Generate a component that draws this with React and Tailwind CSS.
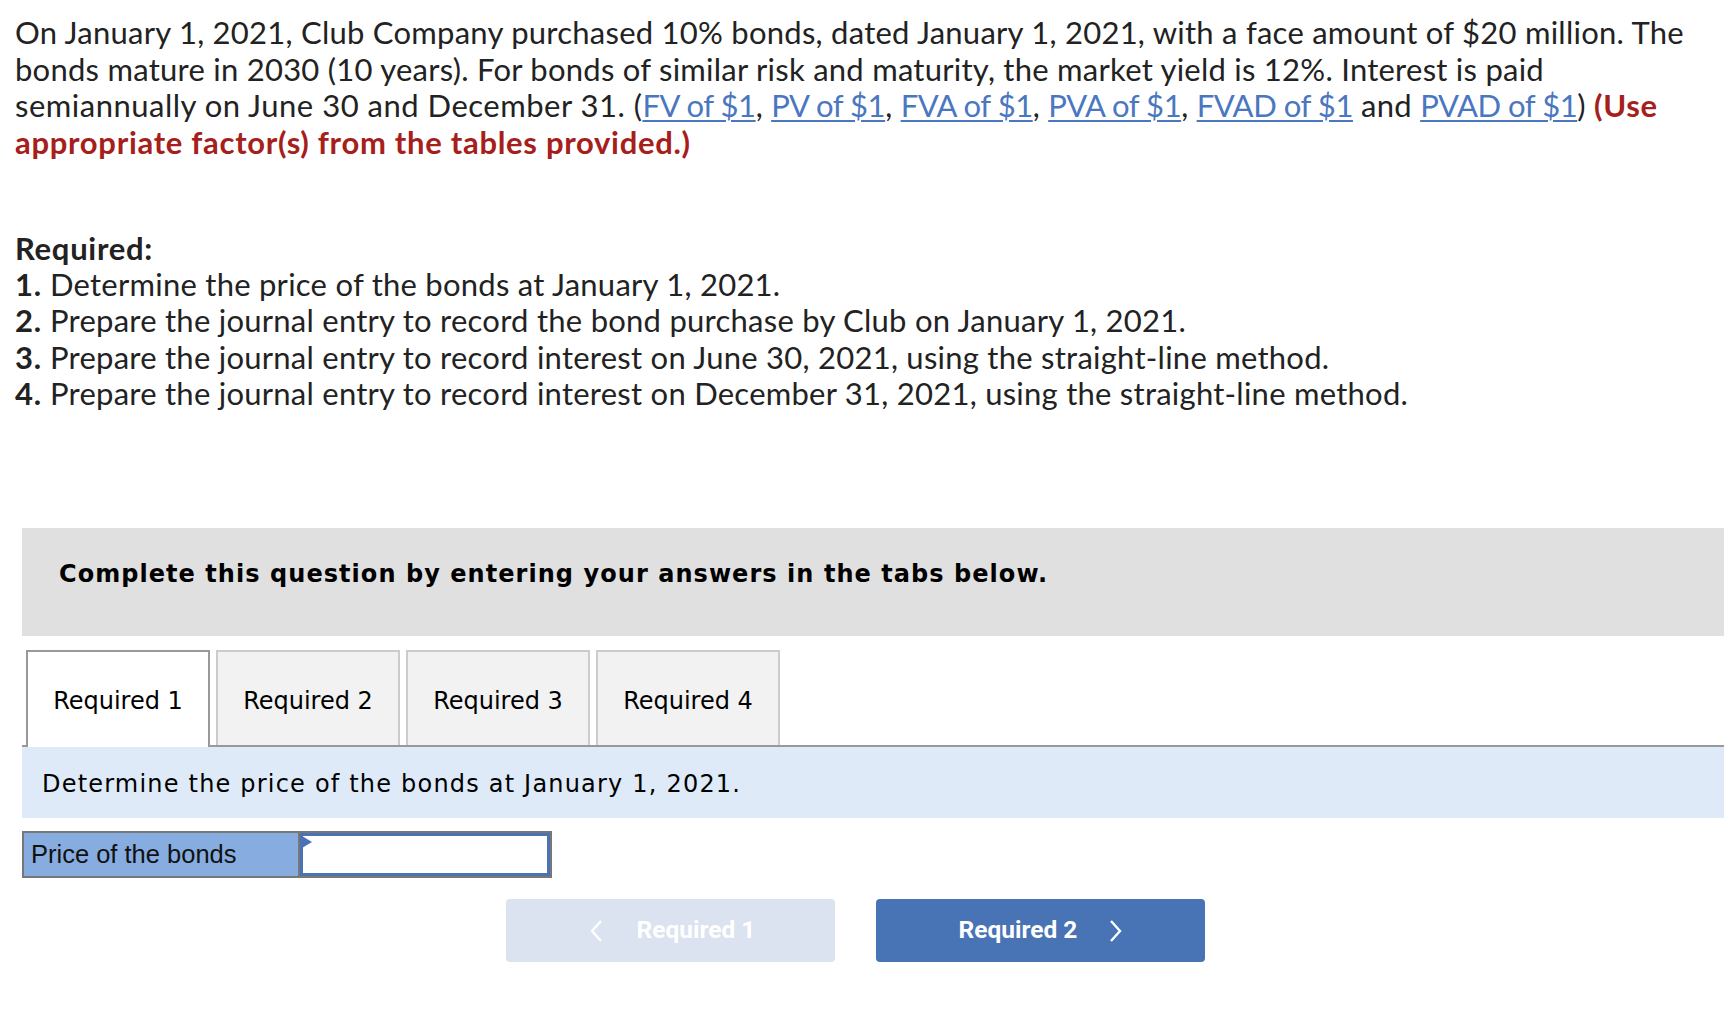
const links = ["FV of $1", "PV of $1", "FVA of $1", "PVA of $1", "FVAD of $1"];

const Link = ({ children }) => (
  <a href="#" className="text-[#4a77c0] tracking-[-0.45px] underline underline-offset-[3px] decoration-[1.5px]">
    {children}
  </a>
);

const Chevron = ({ left }) => (
  <svg width="13" height="24" viewBox="0 0 13 24" fill="none" stroke="currentColor" strokeWidth="2.4">
    {left ? <polyline points="11,2 2,12 11,22" /> : <polyline points="2,2 11,12 2,22" />}
  </svg>
);

const tabs = ["Required 1", "Required 2", "Required 3", "Required 4"];

export default function App() {
  return (
    <div className="min-h-screen w-full bg-white text-[#222] font-['Lato','Open_Sans',sans-serif]">
      <div className="pl-[15px] pt-[14px] text-[31px] leading-[36.5px] tracking-[0.25px]">
        <p>
          On January 1, 2021, Club Company purchased 10% bonds, dated January 1, 2021, with a face amount of $20 million. The
          <br />
          bonds mature in 2030 (10 years). For bonds of similar risk and maturity, the market yield is 12%. Interest is paid
          <br />
          <span className="tracking-[0.5px]">semiannually on June 30 and December 31. (</span>
          {links.map((l) => (
            <span key={l}>
              <Link>{l}</Link>
              {l === "FVAD of $1" ? " and " : ", "}
            </span>
          ))}
          <Link>PVAD of $1</Link>){" "}
          <span className="font-bold tracking-[0.7px] text-[#a6201b]">
            (Use
            <br />
            appropriate factor(s) from the tables provided.)
          </span>
        </p>

        <div className="mt-[70px] leading-[36.2px]">
          <p className="font-bold tracking-[0.7px]">Required:</p>
          <p><b className="tracking-[0.7px]">1.</b> Determine the price of the bonds at January 1, 2021.</p>
          <p><b className="tracking-[0.7px]">2.</b> Prepare the journal entry to record the bond purchase by Club on January 1, 2021.</p>
          <p><b className="tracking-[0.7px]">3.</b> Prepare the journal entry to record interest on June 30, 2021, using the straight-line method.</p>
          <p><b className="tracking-[0.7px]">4.</b> Prepare the journal entry to record interest on December 31, 2021, using the straight-line method.</p>
        </div>
      </div>

      <div className="ml-[22px] mr-[12px] mt-[117px] font-['DejaVu_Sans','Verdana',sans-serif] text-black">
        <div className="h-[108px] bg-[#e0e0e0] pl-[37px] pt-[31px]">
          <p className="text-[24px] font-bold leading-[30px] tracking-[1.05px]">
            Complete this question by entering your answers in the tabs below.
          </p>
        </div>

        <div className="mt-[14px] flex gap-[6px] border-b-2 border-[#999] pl-[4px]">
          {tabs.map((t, i) =>
            i === 0 ? (
              <div
                key={t}
                className="-mb-[2px] flex h-[97px] w-[184px] items-center justify-center border-2 border-b-0 border-[#999] bg-white pt-[3px] text-[24px]"
              >
                {t}
              </div>
            ) : (
              <div
                key={t}
                className="flex h-[95px] w-[184px] items-center justify-center border-2 border-b-0 border-[#ccc] bg-[#f2f2f2] pt-[5px] text-[24px]"
              >
                {t}
              </div>
            )
          )}
        </div>

        <div className="flex h-[71px] items-center bg-[#deeaf7] pl-[20px] pt-[3px] text-[24px] tracking-[1.2px]">
          Determine the price of the bonds at January 1, 2021.
        </div>

        <div className="mt-[13px] flex h-[47px] w-[530px] border-2 border-[#777] font-['Liberation_Sans','Arial',sans-serif] text-[25.5px]">
          <div className="flex w-[274px] items-center bg-[#86ace0] pl-[7px] text-[#111]">Price of the bonds</div>
          <div className="relative flex-1 border-l-2 border-[#777] bg-white">
            <div className="h-full w-full border-[3px] border-[#4a72b5]" />
            <span className="absolute left-[2px] top-[3px] h-0 w-0 border-y-[6px] border-l-[10px] border-y-transparent border-l-[#4a72b5]" />
          </div>
        </div>

        <div className="mt-[21px] flex gap-[41px] pl-[484px] font-['Roboto','Lato',sans-serif]">
          <button className="flex h-[63px] w-[329px] items-center justify-center gap-[34px] rounded-[4px] bg-[#dae3ef] pl-[4px] text-[24.5px] font-bold text-white">
            <Chevron left />
            <span>Required 1</span>
          </button>
          <button className="flex h-[63px] w-[329px] items-center justify-center gap-[32px] rounded-[4px] bg-[#4873b4] text-[24.5px] font-bold text-white">
            <span>Required 2</span>
            <Chevron />
          </button>
        </div>
      </div>
    </div>
  );
}
